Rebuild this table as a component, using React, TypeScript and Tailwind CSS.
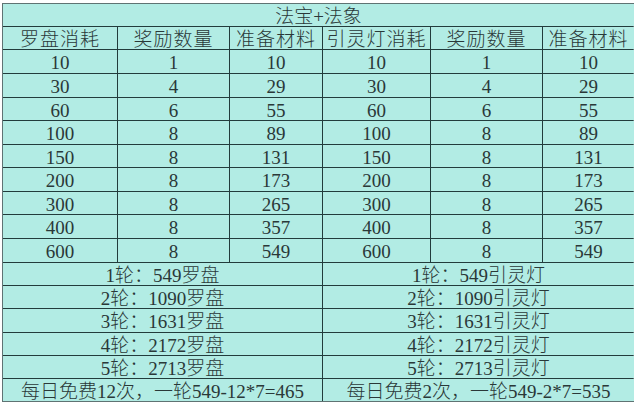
import React from "react";

const rows: (string | number)[][] = [
  [10, 1, 10, 10, 1, 10],
  [30, 4, 29, 30, 4, 29],
  [60, 6, 55, 60, 6, 55],
  [100, 8, 89, 100, 8, 89],
  [150, 8, 131, 150, 8, 131],
  [200, 8, 173, 200, 8, 173],
  [300, 8, 265, 300, 8, 265],
  [400, 8, 357, 400, 8, 357],
  [600, 8, 549, 600, 8, 549],
];

const lun = [
  ["1轮：549罗盘", "1轮：549引灵灯"],
  ["2轮：1090罗盘", "2轮：1090引灵灯"],
  ["3轮：1631罗盘", "3轮：1631引灵灯"],
  ["4轮：2172罗盘", "4轮：2172引灵灯"],
  ["5轮：2713罗盘", "5轮：2713引灵灯"],
];

const headers = ["罗盘消耗", "奖励数量", "准备材料", "引灵灯消耗", "奖励数量", "准备材料"];

const cell = "bg-[#b2ece4] flex items-center justify-center leading-none pt-[2px]";

export default function App() {
  return (
    <div className="w-[638px] h-[404px] bg-white pt-[3px] pl-[2px]">
      <div
        className="w-[632px] border border-[#5f7373] bg-[#223c3c] grid gap-px text-[#2a3838] text-[19px] font-light"
        style={{ fontFamily: '"Liberation Serif", "Noto Sans CJK SC", serif' }}
      >
        <div className="grid gap-px grid-cols-[114px_111px_92px_107px_111px_91px] grid-rows-[22px_22px_23px_23px_22px_23px_22px_23px_22px_23px_23px_22px_22px_23px_22px_22px_22px]">
          <div className={`${cell} col-span-6`}>法宝+法象</div>
          {headers.map((h, i) => (
            <div key={"h" + i} className={`${cell} tracking-[1px]`}>
              {h}
            </div>
          ))}
          {rows.map((r, ri) =>
            r.map((v, ci) => (
              <div key={ri + "-" + ci} className={cell}>
                {v}
              </div>
            ))
          )}
          {lun.map((pair, i) => (
            <React.Fragment key={"l" + i}>
              <div className={`${cell} col-span-3`}>{pair[0]}</div>
              <div className={`${cell} col-span-3`}>{pair[1]}</div>
            </React.Fragment>
          ))}
          <div className={`${cell} col-span-3`}>每日免费12次，一轮549-12*7=465</div>
          <div className={`${cell} col-span-3`}>每日免费2次，一轮549-2*7=535</div>
        </div>
      </div>
    </div>
  );
}
